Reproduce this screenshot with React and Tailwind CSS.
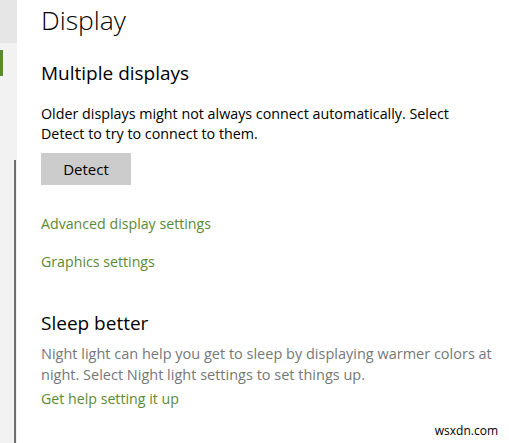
import React from 'react'

const font = { fontFamily: '"Open Sans", "Noto Sans", sans-serif' }

// Left navigation strip with the selected-item marker and scroll track
function Sidebar() {
  return (
    <div className="flex w-[17px] shrink-0 flex-col bg-[#f2f2f2]">
      <div className="h-[43px] bg-[#e6e6e6]" />
      <div className="mt-[7px] h-[26px] w-[3px] bg-[#5a8a2f]" />
      <div className="ml-[14px] mt-[84px] w-[2px] flex-1 bg-[#6f6f6f]" />
    </div>
  )
}

function Link({ children, className = '' }) {
  return (
    <a href="#" className={'block text-[14.2px] leading-[20px] text-[#5b8a36] ' + className}>
      {children}
    </a>
  )
}

export default function App() {
  return (
    <div className="relative flex h-screen w-full overflow-hidden bg-white" style={font}>
      <Sidebar />
      <div className="flex-1 pl-[24px] pr-4">
        <h1 className="mt-[1px] text-[26.5px] font-light leading-[38px] text-black">Display</h1>

        <h2 className="mt-[21px] text-[19px] leading-[26px] text-black">Multiple displays</h2>
        <p className="mt-[18px] text-[14.3px] leading-[20px] text-black">
          Older displays might not always connect automatically. Select
          <br />
          Detect to try to connect to them.
        </p>
        <button className="mt-[9px] h-[32px] w-[90px] bg-[#cccccc] text-[15px] text-black">Detect</button>

        <Link className="mt-[29px]">Advanced display settings</Link>
        <Link className="mt-[18px]">Graphics settings</Link>

        <h2 className="mt-[38px] text-[19px] leading-[26px] text-black">Sleep better</h2>
        <p className="mt-[7px] text-[14.5px] leading-[21px] text-[#777777]">
          Night light can help you get to sleep by displaying warmer colors at
          <br />
          night. Select Night light settings to set things up.
        </p>
        <Link className="mt-[4px]">Get help setting it up</Link>
      </div>
      <span className="absolute bottom-[4px] right-[11px] text-[12px] leading-[16px] text-black">wsxdn.com</span>
    </div>
  )
}
